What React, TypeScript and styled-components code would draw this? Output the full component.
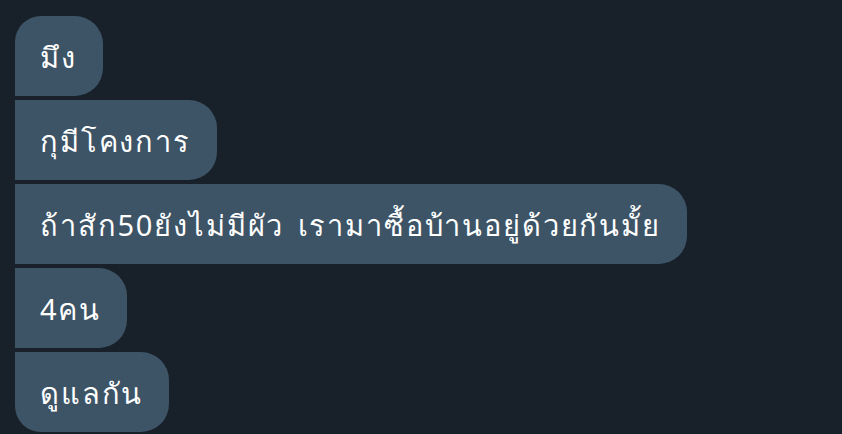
import React from "react";
import styled, { createGlobalStyle } from "styled-components";

const Global = createGlobalStyle`
  html, body { margin: 0; padding: 0; background: #18202a; }
  body { font-family: "Noto Sans", "Liberation Sans", sans-serif; }
`;

const Thread = styled.div`
  display: flex;
  flex-direction: column;
  align-items: flex-start;
  gap: 4px;
  padding: 16px 0 0 15px;
  width: 842px;
  height: 434px;
  box-sizing: border-box;
  overflow: hidden;
  background: #18202a;
`;

const Bubble = styled.div<{ $first?: boolean; $last?: boolean }>`
  display: flex;
  align-items: center;
  height: 80px;
  box-sizing: border-box;
  padding: 4px 26px 0 25px;
  background: #3d5466;
  color: #ffffff;
  font-size: 29px;
  letter-spacing: 1.85px;
  word-spacing: 4px;
  white-space: nowrap;
  border-radius: ${(p) => (p.$first ? "26px" : "0")} 28px 28px ${(p) => (p.$last ? "26px" : "0")};
`;

const messages = [
  "มึง",
  "กุมีโคงการ",
  "ถ้าสัก50ยังไม่มีผัว เรามาซื้อบ้านอยู่ด้วยกันมั้ย",
  "4คน",
  "ดูแลกัน",
];

export default function App() {
  return (
    <>
      <Global />
      <Thread>
        {messages.map((m, i) => (
          <Bubble key={i} $first={i === 0} $last={i === messages.length - 1}>
            {m}
          </Bubble>
        ))}
      </Thread>
    </>
  );
}
